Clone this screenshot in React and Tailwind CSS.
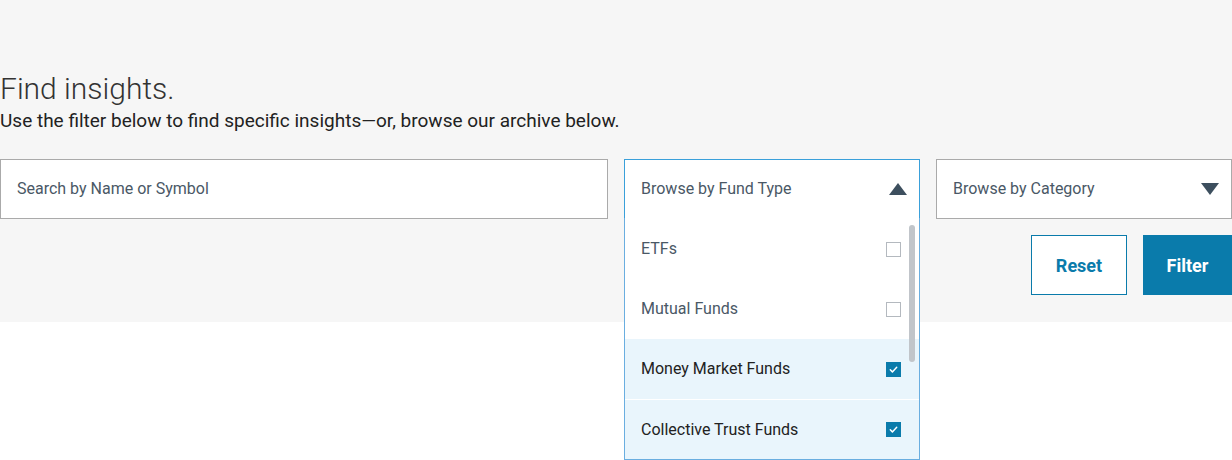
import { useState } from 'react';

const fundTypes = [
  { label: 'ETFs', checked: false },
  { label: 'Mutual Funds', checked: false },
  { label: 'Money Market Funds', checked: true },
  { label: 'Collective Trust Funds', checked: true },
];

function Checkbox({ checked }) {
  if (checked) {
    return (
      <span className="flex h-[15px] w-[15px] items-center justify-center bg-[#0a7bab]">
        <svg width="11" height="11" viewBox="0 0 12 12" fill="none">
          <path d="M2.5 6.3l2.3 2.3 4.7-5" stroke="#fff" strokeWidth="1.6" strokeLinecap="round" strokeLinejoin="round" />
        </svg>
      </span>
    );
  }
  return <span className="h-[15px] w-[15px] border border-[#b4b9bf] bg-white" />;
}

export default function App() {
  const [open] = useState(true);

  return (
    <div className="min-h-[460px] bg-white" style={{ fontFamily: 'Roboto, "Liberation Sans", sans-serif' }}>
      <section className="h-[322px] bg-[#f6f6f6] pt-[70px]">
        <h1 className="text-[30px] font-light leading-[38px] text-[#333]">Find insights.</h1>
        <p className="text-[19px] leading-[26px] text-[#222]">
          Use the filter below to find specific insights—or, browse our archive below.
        </p>

        <div className="mt-[25px] grid grid-cols-[608px_296px_296px] gap-x-4">
          <div className="flex h-[60px] items-center border border-[#aaa] bg-white px-4 text-[16px] text-[#4a5866]">
            Search by Name or Symbol
          </div>

          <div className="relative">
            <div className="flex h-[60px] items-center justify-between border border-[#3aa0da] bg-white pl-4 pr-[12px] text-[16px] text-[#4a5866]">
              <span>Browse by Fund Type</span>
              <svg width="18" height="12" viewBox="0 0 18 12">
                <path d="M9 0L18 12H0z" fill="#3d4f5e" />
              </svg>
            </div>
            {open && (
              <div className="absolute left-0 right-0 top-[59px] z-10 border border-t-0 border-[#6aaee0] bg-white pt-px">
                <ul>
                  {fundTypes.map((f, i) => (
                    <li
                      key={f.label}
                      className={`flex h-[60px] items-center justify-between pl-4 pr-[18px] text-[16px] ${
                        f.checked ? 'bg-[#e9f5fc] text-[#222]' : 'text-[#4a5866]'
                      } ${i === 3 ? 'border-t border-white' : ''}`}
                    >
                      <span>{f.label}</span>
                      <Checkbox checked={f.checked} />
                    </li>
                  ))}
                </ul>
                <div className="absolute right-[4px] top-[7px] h-[137px] w-[6px] rounded-full bg-[#c1c5ca]" />
              </div>
            )}
          </div>

          <div className="flex h-[60px] items-center justify-between border border-[#aaa] bg-white pl-4 pr-[12px] text-[16px] text-[#4a5866]">
            <span>Browse by Category</span>
            <svg width="18" height="12" viewBox="0 0 18 12">
              <path d="M0 0H18L9 12z" fill="#3d4f5e" />
            </svg>
          </div>

          <div className="col-start-3 mt-[16px] flex justify-end gap-[16px]">
            <button className="h-[60px] w-[96px] border border-[#0a7bab] bg-white text-[18px] font-bold text-[#0a7bab]">
              Reset
            </button>
            <button className="h-[60px] w-[89px] bg-[#0a7bab] text-[18px] font-bold text-white">
              Filter
            </button>
          </div>
        </div>
      </section>
    </div>
  );
}
